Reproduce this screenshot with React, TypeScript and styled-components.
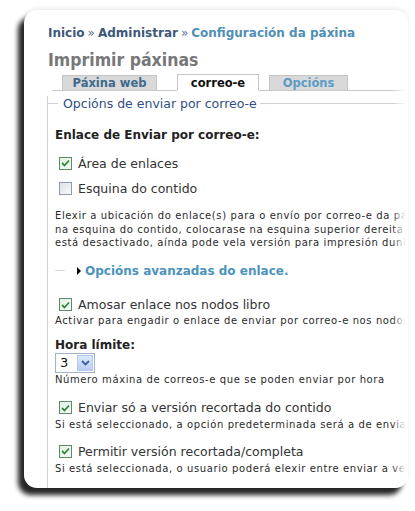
import React from "react";
import styled, { createGlobalStyle } from "styled-components";

const Global = createGlobalStyle`
  html, body { margin: 0; padding: 0; background: #ffffff; }
  body { font-family: "DejaVu Sans", Verdana, sans-serif; }
`;

const Stage = styled.div`
  width: 415px;
  height: 511px;
  padding: 10px 0 0 24px;
  box-sizing: border-box;
  overflow: hidden;
`;

const Card = styled.div`
  position: relative;
  width: 384px;
  height: 478px;
  background: #fff;
  border-radius: 13px;
  overflow: hidden;
  box-shadow: -6px 7px 5px rgba(0, 0, 0, 0.85), 0 -2px 4px rgba(0, 0, 0, 0.08);
  padding: 15px 0 0 24px;
  box-sizing: border-box;
`;

const Fade = styled.div`
  position: absolute;
  top: 0;
  right: 0;
  width: 16px;
  height: 100%;
  background: linear-gradient(to right, rgba(255,255,255,0), #fff 85%);
  pointer-events: none;
`;

const Breadcrumb = styled.div`
  font-size: 12px;
  font-weight: bold;
  white-space: nowrap;
  line-height: 16px;
`;

const Crumb = styled.span<{ $current?: boolean }>`
  color: ${(p) => (p.$current ? "#4f8fb6" : "#3d5878")};
`;

const Sep = styled.span`
  color: #5f7088;
  font-weight: normal;
  margin: 0 3px;
`;

const Title = styled.h1`
  margin: 8px 0 0 0;
  font-family: "DejaVu Sans Condensed", "DejaVu Sans", sans-serif;
  font-size: 17.5px;
  line-height: 22px;
  font-weight: bold;
  color: #777;
  white-space: nowrap;
`;

const Tabs = styled.div`
  display: flex;
  align-items: flex-end;
  margin: 3px 0 0 4px;
  border-bottom: 1px solid #c8c8c8;
  height: 16px;
`;

const Tab = styled.div<{ $active?: boolean; $w: number; $ml: number }>`
  width: ${(p) => p.$w}px;
  margin-left: ${(p) => p.$ml}px;
  height: ${(p) => (p.$active ? 17 : 15)}px;
  margin-bottom: ${(p) => (p.$active ? -1 : 0)}px;
  box-sizing: border-box;
  display: flex;
  align-items: center;
  justify-content: center;
  font-size: 11.5px;
  font-weight: bold;
  white-space: nowrap;
  background: ${(p) => (p.$active ? "#fff" : "#d9d9d9")};
  border: 1px solid ${(p) => (p.$active ? "#c8c8c8" : "#c4c4c4")};
  border-bottom: ${(p) => (p.$active ? "1px solid #fff" : "none")};
  color: ${(p) => (p.$active ? "#111" : "#3f6a8c")};
`;

const TabText = styled.span<{ $light?: boolean }>`
  color: ${(p) => (p.$light ? "#5b9bc6" : "inherit")};
`;

const Fieldset = styled.div`
  margin: 5px 0 0 -1px;
  border-left: 1px solid #cfcfcf;
  padding: 0 0 40px 7px;
`;

const Legend = styled.div`
  display: flex;
  align-items: center;
  margin-left: -8px;
  height: 14px;
  font-size: 12.5px;
  color: #2f4f82;
  white-space: nowrap;
  &::before {
    content: "";
    width: 11px;
    height: 1px;
    background: #cfcfcf;
    margin-right: 5px;
  }
  &::after {
    content: "";
    flex: 1;
    height: 1px;
    background: #cfcfcf;
    margin-left: 3px;
  }
`;

const Label = styled.div<{ $mt: number }>`
  margin-top: ${(p) => p.$mt}px;
  font-size: 12px;
  font-weight: bold;
  color: #222;
  white-space: nowrap;
  line-height: 16px;
`;

const CheckRow = styled.div<{ $mt: number }>`
  display: flex;
  align-items: center;
  margin: ${(p) => p.$mt}px 0 0 4px;
  height: 16px;
  font-size: 12.5px;
  color: #333;
  white-space: nowrap;
`;

const Box = styled.span<{ $checked?: boolean }>`
  width: 11px;
  height: 11px;
  border: 1px solid ${(p) => (p.$checked ? "#5c8a6a" : "#8e9aa6")};
  background: ${(p) =>
    p.$checked
      ? "linear-gradient(135deg, #e2f0e2, #f8fbf8)"
      : "linear-gradient(135deg, #dfe3e8, #f7f8f9)"};
  margin-right: 6px;
  display: flex;
  align-items: center;
  justify-content: center;
  flex: none;
`;

const Desc = styled.div<{ $mt: number }>`
  margin-top: ${(p) => p.$mt}px;
  font-size: 10px;
  letter-spacing: 0.6px;
  line-height: 13.5px;
  color: #2a2a2a;
  white-space: nowrap;
`;

const Collapsed = styled.div`
  display: flex;
  align-items: center;
  margin-top: 13px;
  height: 16px;
  white-space: nowrap;
  &::before {
    content: "";
    width: 10px;
    height: 1px;
    background: #d8d8d8;
    margin-right: 12px;
  }
`;

const Arrow = styled.span`
  width: 0;
  height: 0;
  border-top: 4px solid transparent;
  border-bottom: 4px solid transparent;
  border-left: 4px solid #000;
  margin-right: 4px;
`;

const CollapsedLink = styled.span`
  font-size: 12px;
  font-weight: bold;
  color: #4b93bd;
`;

const Select = styled.div`
  display: flex;
  width: 40px;
  height: 20px;
  box-sizing: border-box;
  border: 1px solid #9fb2c8;
  background: #fff;
`;

const SelectValue = styled.span`
  flex: 1;
  font-size: 13px;
  line-height: 18px;
  padding-left: 4px;
  color: #111;
`;

const SelectBtn = styled.span`
  width: 16px;
  margin: 1px;
  background: linear-gradient(#dbe7fb, #b9cdf3);
  border: 1px solid #b5c8ee;
  box-sizing: border-box;
  display: flex;
  align-items: center;
  justify-content: center;
`;

const Check = () => (
  <svg width="9" height="8" viewBox="0 0 9 8">
    <path d="M1 4 L3.5 6.5 L8 1.5" fill="none" stroke="#2f8a3a" strokeWidth="1.8" />
  </svg>
);

const Chevron = () => (
  <svg width="9" height="6" viewBox="0 0 9 6">
    <path d="M1 1 L4.5 4.5 L8 1" fill="none" stroke="#3b5fa8" strokeWidth="1.8" />
  </svg>
);

const Checkbox = ({ checked, label, mt }: { checked?: boolean; label: string; mt: number }) => (
  <CheckRow $mt={mt}>
    <Box $checked={checked}>{checked && <Check />}</Box>
    {label}
  </CheckRow>
);

export default function App() {
  return (
    <>
      <Global />
      <Stage>
        <Card>
          <Breadcrumb>
            <Crumb>Inicio</Crumb>
            <Sep>»</Sep>
            <Crumb>Administrar</Crumb>
            <Sep>»</Sep>
            <Crumb $current>Configuración da páxina</Crumb>
          </Breadcrumb>
          <Title>Imprimir páxinas</Title>
          <Tabs>
            <Tab $w={95} $ml={10}>Páxina web</Tab>
            <Tab $active $w={82} $ml={20}>correo-e</Tab>
            <Tab $w={79} $ml={10}><TabText $light>Opcións</TabText></Tab>
          </Tabs>
          <Fieldset>
            <Legend>Opcións de enviar por correo-e</Legend>
            <Label $mt={17}>Enlace de Enviar por correo-e:</Label>
            <Checkbox checked label="Área de enlaces" mt={12} />
            <Checkbox label="Esquina do contido" mt={9} />
            <Desc $mt={13}>
              Elexir a ubicación do enlace(s) para o envío por correo-e da páxina.
              <br />
              na esquina do contido, colocarase na esquina superior dereita do contido.
              <br />
              está desactivado, aínda pode vela versión para impresión dunha páxina.
            </Desc>
            <Collapsed>
              <Arrow />
              <CollapsedLink>Opcións avanzadas do enlace.</CollapsedLink>
            </Collapsed>
            <Checkbox checked label="Amosar enlace nos nodos libro" mt={18} />
            <Desc $mt={1}>Activar para engadir o enlace de enviar por correo-e nos nodos libro.</Desc>
            <Label $mt={10}>Hora límite:</Label>
            <Select>
              <SelectValue>3</SelectValue>
              <SelectBtn><Chevron /></SelectBtn>
            </Select>
            <Desc $mt={0}>Número máxina de correos-e que se poden enviar por hora</Desc>
            <Checkbox checked label="Enviar só a versión recortada do contido" mt={13} />
            <Desc $mt={2}>Si está seleccionado, a opción predeterminada será a de enviar só o resumo.</Desc>
            <Checkbox checked label="Permitir versión recortada/completa" mt={12} />
            <Desc $mt={3}>Si está seleccionada, o usuario poderá elexir entre enviar a versión.</Desc>
          </Fieldset>
          <Fade />
        </Card>
      </Stage>
    </>
  );
}
